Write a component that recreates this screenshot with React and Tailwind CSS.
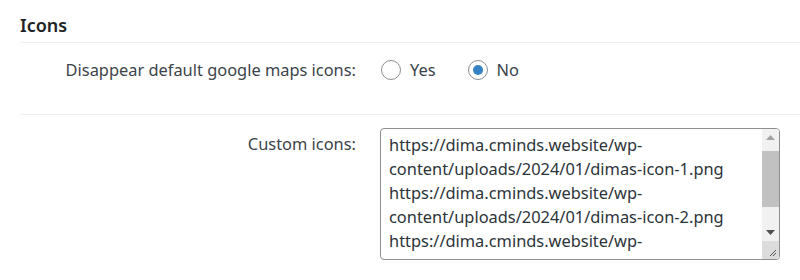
import { useState } from "react";

const iconUrls = [
  "https://dima.cminds.website/wp-content/uploads/2024/01/dimas-icon-1.png",
  "https://dima.cminds.website/wp-content/uploads/2024/01/dimas-icon-2.png",
  "https://dima.cminds.website/wp-content/uploads/2024/01/dimas-icon-3.png",
];

function Radio({ checked, label, onClick }) {
  return (
    <label className="flex items-center gap-[9px] cursor-pointer" onClick={onClick}>
      <span className="flex h-[20px] w-[20px] items-center justify-center rounded-full border border-[#8c8f94] bg-white">
        {checked ? <span className="h-[10px] w-[10px] rounded-full bg-[#3582c4]" /> : null}
      </span>
      <span>{label}</span>
    </label>
  );
}

function FakeScrollbar() {
  return (
    <div className="flex w-[17px] flex-col bg-[#f1f1f1]">
      <div className="flex h-[17px] items-center justify-center">
        <svg width="9" height="5" viewBox="0 0 9 5">
          <path d="M0 5 L4.5 0 L9 5 Z" fill="#a3a3a3" />
        </svg>
      </div>
      <div className="mt-[5px] h-[56px] bg-[#c1c1c1]" />
      <div className="flex-1" />
      <div className="flex h-[17px] items-center justify-center">
        <svg width="9" height="5" viewBox="0 0 9 5">
          <path d="M0 0 L9 0 L4.5 5 Z" fill="#505050" />
        </svg>
      </div>
      <div className="flex h-[18px] items-end justify-end bg-[#dcdcdc] p-[2px]">
        <svg width="9" height="9" viewBox="0 0 9 9">
          <path d="M8 2 L2 8 M8 5 L5 8" stroke="#555" strokeWidth="1" />
        </svg>
      </div>
    </div>
  );
}

export default function App() {
  const [hideIcons, setHideIcons] = useState(false);

  return (
    <div className="h-[280px] w-[800px] overflow-hidden bg-white pl-[20px] font-['Noto_Sans','Open_Sans',sans-serif] text-[16.4px] text-[#3c434a]">
      <h2 className="pt-[14px] pb-[5px] text-[18px] leading-[23px] font-semibold text-[#1d2327]">Icons</h2>
      <div className="border-t border-[#f0f0f1]">
        <div className="flex h-[71px] items-start pt-[16px]">
          <div className="w-[336px] text-right leading-[22px]">Disappear default google maps icons:</div>
          <div className="ml-[25px] flex items-center gap-[32px] leading-[22px]">
            <Radio checked={hideIcons} label="Yes" onClick={() => setHideIcons(true)} />
            <Radio checked={!hideIcons} label="No" onClick={() => setHideIcons(false)} />
          </div>
        </div>
      </div>
      <div className="border-t border-[#f0f0f1] pt-[13px]">
        <div className="flex items-start">
          <div className="w-[336px] pt-[5px] text-right leading-[22px]">Custom icons:</div>
          <div className="ml-[24px] flex h-[132px] w-[400px] overflow-hidden rounded-[4px] border border-[#8c8f94] bg-white">
            <div className="flex-1 px-[8px] pt-[4px]">
              <div className="h-[120px] overflow-hidden leading-[24px] text-[#2c3338] [overflow-wrap:anywhere]">
                {iconUrls.map((url) => (
                  <div key={url}>{url}</div>
                ))}
              </div>
            </div>
            <FakeScrollbar />
          </div>
        </div>
      </div>
    </div>
  );
}
